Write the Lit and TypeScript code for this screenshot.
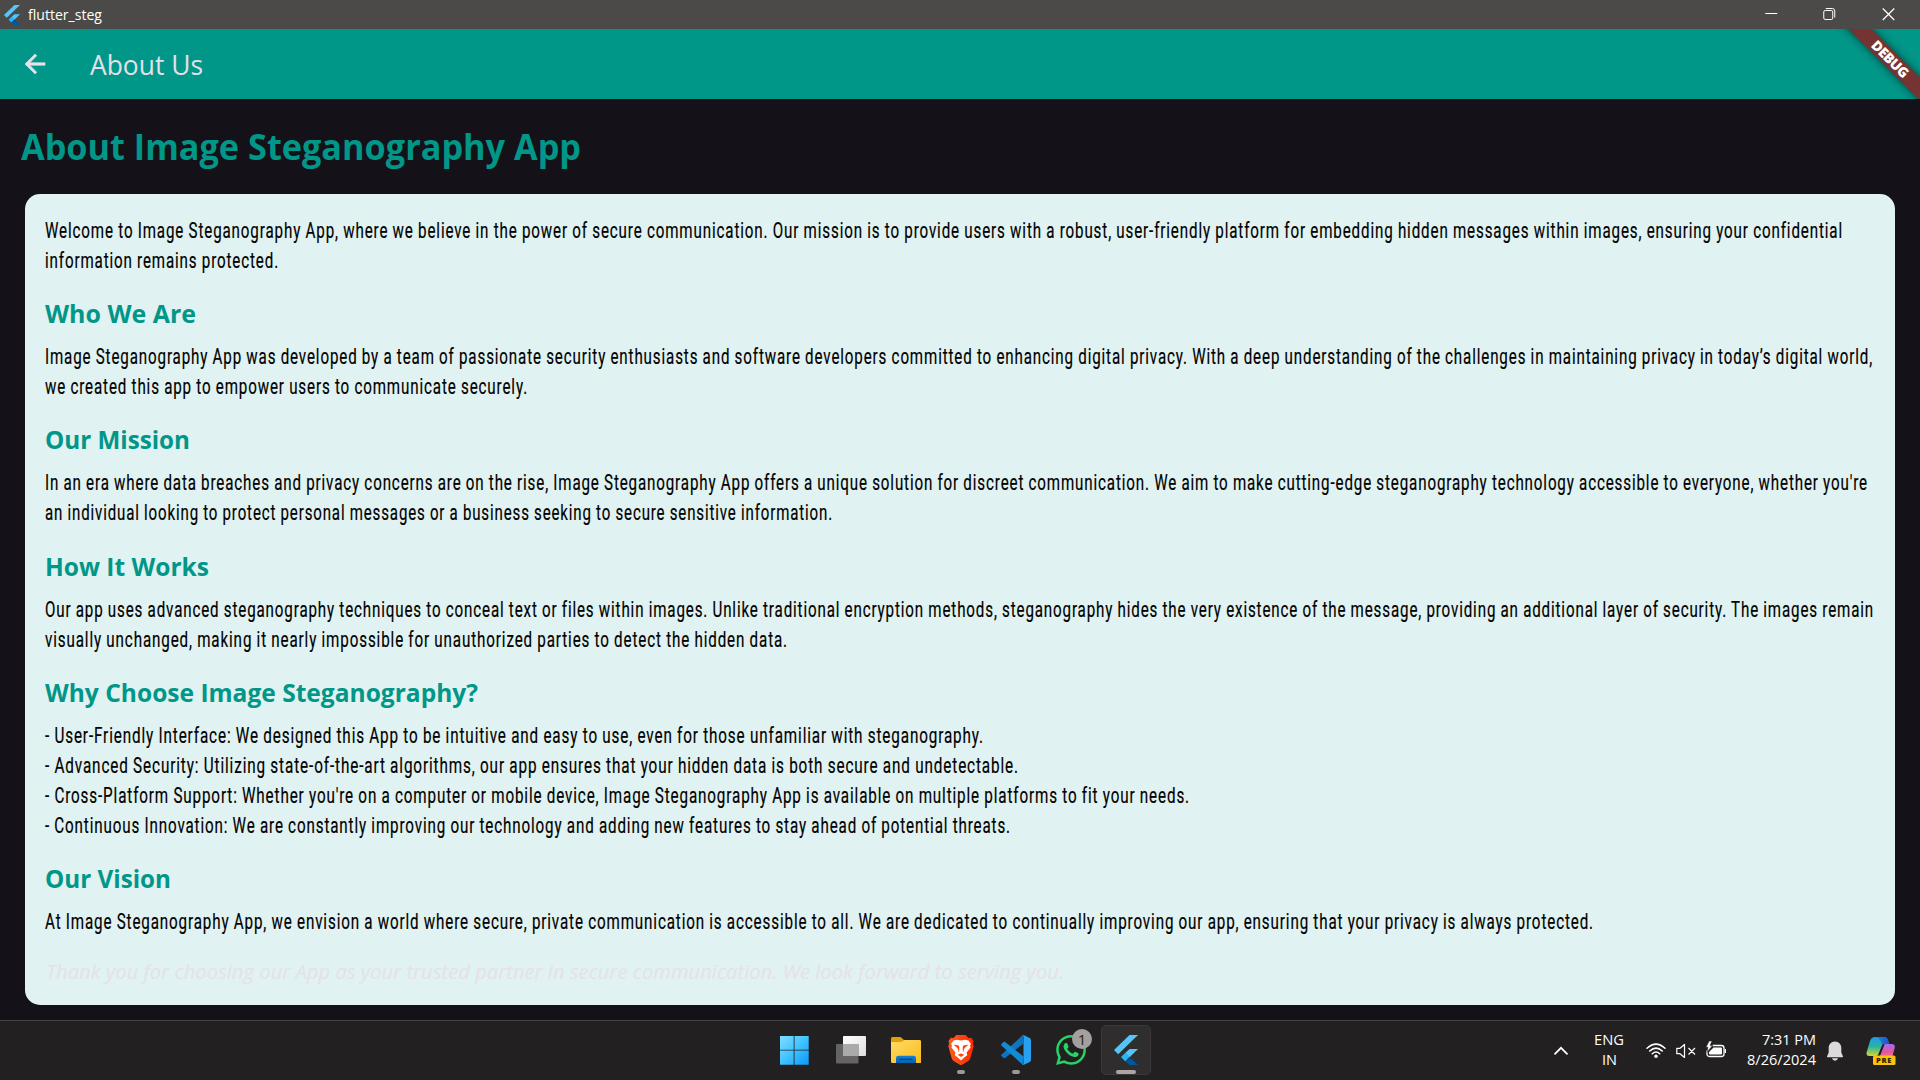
import { LitElement, html, svg, css } from "lit";
import { customElement, property } from "lit/decorators.js";

/** One line of text, condensed or widened horizontally to a given measure. */
@customElement("fit-text")
class FitText extends LitElement {
  @property() text = "";
  @property({ type: Number }) measure = 100;

  static styles = css`
    :host { display: block; white-space: pre; flex: none; }
    .t { display: inline-block; transform-origin: 0 50%; }
  `;

  render() {
    return html`<span class="t">${this.text}</span>`;
  }

  updated() {
    const t = this.renderRoot.querySelector(".t") as HTMLElement;
    this.style.width = this.measure + "px";
    t.style.transform = "none";
    const w = t.getBoundingClientRect().width;
    if (w > 0) t.style.transform = "scaleX(" + this.measure / w + ")";
  }
}

type Line = [string, number];
interface Section { title: Line; lines: Line[]; }

const INTRO: Line[] = [
  ["Welcome to Image Steganography App, where we believe in the power of secure communication. Our mission is to provide users with a robust, user-friendly platform for embedding hidden messages within images, ensuring your confidential", 1798],
  ["information remains protected.", 234],
];

const SECTIONS: Section[] = [
  { title: ["Who We Are", 151], lines: [
    ["Image Steganography App was developed by a team of passionate security enthusiasts and software developers committed to enhancing digital privacy. With a deep understanding of the challenges in maintaining privacy in today’s digital world,", 1828],
    ["we created this app to empower users to communicate securely.", 483],
  ] },
  { title: ["Our Mission", 145], lines: [
    ["In an era where data breaches and privacy concerns are on the rise, Image Steganography App offers a unique solution for discreet communication. We aim to make cutting-edge steganography technology accessible to everyone, whether you're", 1823],
    ["an individual looking to protect personal messages or a business seeking to secure sensitive information.", 788],
  ] },
  { title: ["How It Works", 164], lines: [
    ["Our app uses advanced steganography techniques to conceal text or files within images. Unlike traditional encryption methods, steganography hides the very existence of the message, providing an additional layer of security. The images remain", 1829],
    ["visually unchanged, making it nearly impossible for unauthorized parties to detect the hidden data.", 743],
  ] },
  { title: ["Why Choose Image Steganography?", 433], lines: [
    ["- User-Friendly Interface: We designed this App to be intuitive and easy to use, even for those unfamiliar with steganography.", 939],
    ["- Advanced Security: Utilizing state-of-the-art algorithms, our app ensures that your hidden data is both secure and undetectable.", 974],
    ["- Cross-Platform Support: Whether you're on a computer or mobile device, Image Steganography App is available on multiple platforms to fit your needs.", 1145],
    ["- Continuous Innovation: We are constantly improving our technology and adding new features to stay ahead of potential threats.", 966],
  ] },
  { title: ["Our Vision", 126], lines: [
    ["At Image Steganography App, we envision a world where secure, private communication is accessible to all. We are dedicated to continually improving our app, ensuring that your privacy is always protected.", 1549],
  ] },
];

const flutterLogo = svg`
  <path d="M15.5 0H24L4.2 19.2 0 15z" fill="#54c5f8"/>
  <path d="M15.5 14H24L15.6 22.2 11.2 18z" fill="#54c5f8"/>
  <path d="M11.3 17.8L15.6 22 11.3 26.4 7 22.1z" fill="#29b6f6"/>
  <path d="M11.3 26.3L15.6 22 24 30H15.5z" fill="#01579b"/>
  <path d="M11.3 26.3L15.6 22 17.6 24z" fill="#0a3d75" opacity=".6"/>`;

@customElement("app-root")
class AppRoot extends LitElement {
  static styles = css`
    :host { display: block; width: 1920px; height: 1080px; overflow: hidden; background: #141218;
      font-family: "Open Sans", "Noto Sans", sans-serif; }
    * { box-sizing: border-box; }
    svg { display: block; flex: none; }
    .screen { display: flex; flex-direction: column; height: 1080px; }
    .titlebar { height: 29px; background: #4c4a48; display: flex; align-items: center; color: #fff;
      justify-content: space-between; padding: 0 3px 0 4px; }
    .caption { display: flex; align-items: center; gap: 8px; }
    .caption .name { font-size: 14px; line-height: 20px; margin-top: 1px; }
    .win { display: flex; }
    .win svg { width: 58.500px; height: 29px; }
    .appbar { height: 70px; background: #009688; display: flex; align-items: center; padding-left: 20px;
      position: relative; overflow: hidden; color: #e6e0e9; }
    .appbar .name { margin: 2px 0 0 40px; font-size: 27px; line-height: 40px; }
    .ribbon { position: absolute; right: -50px; top: 22px; width: 160px; height: 16px; line-height: 16px;
      background: #773331; box-shadow: 0 0 8px rgba(0,0,0,.6); transform: rotate(45deg);
      color: #fff; text-align: center; font-size: 14px; font-weight: 800; letter-spacing: -.5px; }
    .page { flex: 1; padding: 0 25px; display: flex; flex-direction: column; }
    .headline { margin: 24px 0 23px -4px; font-size: 35px; line-height: 48px; font-weight: 700; color: #009688; }
    .card { background: #e0f2f1; border-radius: 15px; height: 811px; padding: 20.700px 20px 0; overflow: hidden; color: #000; }
    .lines { font-family: Roboto, "Open Sans", sans-serif; font-size: 22.500px; line-height: 30px;
      letter-spacing: 1.300px; word-spacing: -.500px; -webkit-text-stroke: .2px #000; }
    .section { margin-top: 22.300px; }
    .section .title { font-size: 25px; line-height: 33.33px; font-weight: 700; color: #009688; margin-bottom: 10.700px; }
    .thanks { margin: 21.500px 0 0 1px; font-size: 19.500px; line-height: 27px; font-style: italic; color: #e6e0e9; }
    .taskbar { height: 60px; background: #222021; border-top: 1px solid #444345; display: flex; color: #fff;
      padding-left: 771px; }
    .apps { display: flex; gap: 5px; padding-top: 4px; }
    .tile { width: 50px; height: 50px; border-radius: 5px; position: relative; display: flex;
      justify-content: center; padding-top: 10px; }
    .tile.start { padding-right: 5px; }
    .tile.on { background: #2f2d2e; border: 1px solid #3a3839; padding-top: 9px; }
    .dot::after { content: ""; position: absolute; left: 21px; bottom: 1px; width: 8px; height: 4px;
      border-radius: 2px; background: #9b9a9a; }
    .on.dot::after { left: 14px; bottom: 0; width: 20px; background: #aaa7a3; }
    .badge { position: absolute; left: 26px; top: 4px; width: 20px; height: 20px; border-radius: 50%;
      background: #a3a09d; color: #222; font-size: 15px; line-height: 20px; text-align: center; }
    .tray { flex: 1; display: flex; align-items: center; padding-left: 400px; font-size: 14.500px; line-height: 20px; }
    .lang { margin-left: 22px; width: 32px; display: flex; flex-direction: column; align-items: center; padding-bottom: 1px; }
    .status { display: flex; margin-left: 21px; gap: 10px; }
    .clock { margin-left: 19px; display: flex; flex-direction: column; align-items: flex-end; width: 71px; padding-bottom: 2px; }
    .bell { margin-left: 10px; }
    .copilot { margin-left: 22px; }
    .pre { font-size: 7.500px; font-weight: 800; letter-spacing: .700px; }
  `;

  private lines(ls: Line[]) {
    return html`<div class="lines">${ls.map(([t, w]) => html`<fit-text .text=${t} .measure=${w}></fit-text>`)}</div>`;
  }

  private apps() {
    return html`<div class="apps">
      <div class="tile start"><svg width="30" height="30" viewBox="0 0 30 30">
        <defs><linearGradient id="w" x1="0" y1="0" x2="30" y2="30" gradientUnits="userSpaceOnUse"><stop stop-color="#84deff"/><stop offset=".5" stop-color="#42c4ff"/><stop offset="1" stop-color="#0c95fb"/></linearGradient></defs>
        <path fill="url(#w)" d="M1 1h13.7v13.7H1zM15.5 1H29.700v13.7H15.5zM1 15.5h13.7V29.700H1zM15.5 15.5H29.700V29.700H15.5z"/></svg></div>
      <div class="tile"><svg width="30" height="30" viewBox="0 0 30 30">
        <defs><linearGradient id="tv" x1="0" y1="0" x2="1" y2="1"><stop stop-color="#fff"/><stop offset="1" stop-color="#ddd"/></linearGradient></defs>
        <rect x="7" y="1" width="23" height="20" rx="1" fill="url(#tv)"/>
        <rect x="0" y="9" width="22.5" height="19.5" rx="1" fill="#646464"/><path d="M7 9h15.5v12H7z" fill="#aaa"/></svg></div>
      <div class="tile"><svg width="30" height="30" viewBox="0 0 30 30">
        <defs><linearGradient id="f" x1="0" y1="0" x2="1" y2="1"><stop stop-color="#ffdb66"/><stop offset="1" stop-color="#fbbc1c"/></linearGradient>
        <linearGradient id="fb" x1="0" y1="0" x2="0" y2="1"><stop stop-color="#1282d8"/><stop offset="1" stop-color="#0561ae"/></linearGradient></defs>
        <path d="M0 8V3.5Q0 2 1.5 2H9.5L13 5H28Q30 5 30 7V8z" fill="#e2a100"/>
        <path d="M0 7H10.5L13.5 5H28.5Q30 5 30 6.5V28H1.5Q0 28 0 26.5z" fill="url(#f)"/>
        <path d="M5 28V23Q5 20.7 7.5 20.7H22.5Q25 20.7 25 23V28z" fill="url(#fb)"/><path d="M8.5 24.3H21.5" stroke="#043f78" stroke-width="1.2"/></svg></div>
      <div class="tile dot"><svg width="30" height="30" viewBox="0 0 30 30">
        <defs><linearGradient id="b" x1="0" x2="1"><stop stop-color="#ff5a1c"/><stop offset="1" stop-color="#fb2c00"/></linearGradient></defs>
        <path d="M10.2 0H19.8L22.4 3 25.2 2.8 27.6 6.2 26.8 8.6 27.7 11 24.5 22.7Q23.8 25 22 26.2L15 30.4 8 26.2Q6.200 25 5.500 22.700L2.300 11 3.200 8.600 2.400 6.200 4.800 2.800 7.600 3z" fill="url(#b)"/>
        <path d="M10.600 4.800L15 5.600 19.400 4.800 22.500 5.400 25 8.900 24 10.500 24.600 12.500 20.600 17.500 21.200 20.300 18.800 22 15 25.500 11.200 22 8.800 20.300 9.400 17.500 5.400 12.500 6 10.500 5 8.900 7.500 5.400z" fill="#fff"/>
        <path d="M7.500 9.600L12.600 10.600 13.300 12 13.200 16 11.200 18 12.600 16 11.500 13.200zM22.500 9.600L17.400 10.600 16.700 12 16.800 16 18.800 18 17.400 16 18.500 13.200zM11.700 19.700L15 18.500 18.300 19.700 15 22z" fill="#ff4510"/></svg></div>
      <div class="tile dot"><svg width="30" height="30" viewBox="0 0 30 30">
        <path d="M21.700 .3L22.500 8.500 4.200 22.900Q3.300 23.600 2.400 22.800L.5 21.100Q-.3 20.200.6 19.400z" fill="#0f74be"/>
        <path d="M.5 8.900L2.400 7.200Q3.300 6.500 4.200 7.100L22.500 21.500 21.700 29.700 .6 10.700Q-.3 9.800.5 8.900z" fill="#1489d6"/>
        <path d="M21.700 .3Q22.200 0 23 .3L28.700 3Q30 3.700 30 5V25Q30 26.300 28.700 27L23 29.700Q21.900 30.100 21 29.200 22.500 29.600 22.500 27.800V2.200Q22.500 .6 21 .8z" fill="#27a1f0"/></svg></div>
      <div class="tile"><svg width="30" height="30" viewBox="0 0 24 24">
        <path fill="#25d366" d="M17.472 14.382c-.297-.149-1.758-.867-2.030-.967-.273-.099-.471-.148-.670.150-.197.297-.767.966-.940 1.164-.173.199-.347.223-.644.075-.297-.150-1.255-.463-2.390-1.475-.883-.788-1.480-1.761-1.653-2.059-.173-.297-.018-.458.130-.606.134-.133.298-.347.446-.520.149-.174.198-.298.298-.497.099-.198.050-.371-.025-.520-.075-.149-.669-1.612-.916-2.207-.242-.579-.487-.500-.669-.510-.173-.008-.371-.010-.570-.010-.198 0-.520.074-.792.372-.272.297-1.040 1.016-1.040 2.479 0 1.462 1.065 2.875 1.213 3.074.149.198 2.096 3.200 5.077 4.487.709.306 1.262.489 1.694.625.712.227 1.360.195 1.871.118.571-.085 1.758-.719 2.006-1.413.248-.694.248-1.289.173-1.413-.074-.124-.272-.198-.570-.347m-5.421 7.403h-.004a9.870 9.870 0 01-5.031-1.378l-.361-.214-3.741.982.998-3.648-.235-.374a9.860 9.860 0 01-1.510-5.260c.001-5.450 4.436-9.884 9.888-9.884 2.640 0 5.122 1.030 6.988 2.898a9.825 9.825 0 012.893 6.994c-.003 5.450-4.437 9.884-9.885 9.884m8.413-18.297A11.815 11.815 0 0012.050 0C5.495 0 .160 5.335.157 11.892c0 2.096.547 4.142 1.588 5.945L.057 24l6.305-1.654a11.882 11.882 0 005.683 1.448h.005c6.554 0 11.890-5.335 11.893-11.893a11.821 11.821 0 00-3.480-8.413z"/></svg>
        <span class="badge">1</span></div>
      <div class="tile on dot"><svg width="24" height="30" viewBox="0 0 24 30">${flutterLogo}</svg></div>
    </div>`;
  }

  private tray() {
    return html`<div class="tray">
      <svg width="20" height="20" viewBox="0 0 20 20" fill="none" stroke="#fff" stroke-width="1.7"><path d="M3.500 13.300L10 6.800 16.500 13.300"/></svg>
      <div class="lang"><fit-text text="ENG" measure="30"></fit-text><fit-text text="IN" measure="15"></fit-text></div>
      <div class="status">
        <svg width="20" height="20" viewBox="0 0 20 20" fill="none" stroke="#fff" stroke-width="1.500" stroke-linecap="round">
          <path d="M1 7.300Q10-1 19 7.300M3.700 10Q10 4.200 16.300 10M6.300 12.700Q10 9.300 13.700 12.700"/><circle cx="10" cy="15.300" r="1.700" fill="#fff" stroke="none"/></svg>
        <svg width="20" height="20" viewBox="0 0 20 20" fill="none" stroke="#fff" stroke-width="1.200" stroke-linejoin="round">
          <path d="M.8 7.300H4L8.500 3.500V16.500L4 12.700H.8zM12.500 7L19 13.500M19 7L12.500 13.500"/></svg>
        <svg width="20" height="20" viewBox="0 0 20 20">
          <path d="M6.500 4.500H15.500Q18 4.500 18 7V13Q18 15.500 15.500 15.500H3.500Q1 15.500 1 13V9.500" fill="none" stroke="#fff" stroke-width="1.300"/>
          <path d="M7.500 6.500H15Q16 6.500 16 7.500V12.500Q16 13.500 15 13.500H4Q3 13.500 3 12.500V11zM18.700 8H20V12H18.700z" fill="#fff"/>
          <path d="M3.200 0L0 6.200H2L1 11.200 6.500 4.500H4L6 0z" fill="#fff" stroke="#222021" stroke-width=".5"/></svg>
      </div>
      <div class="clock"><fit-text text="7:31 PM" measure="54"></fit-text><fit-text text="8/26/2024" measure="69"></fit-text></div>
      <svg class="bell" width="18" height="20" viewBox="0 0 18 20" fill="#dcdbda"><path d="M9 .5C5 .5 2.700 3.500 2.700 7V11.500L1 15.500Q.9 16.300 1.700 16.300H16.300Q17.100 16.300 17 15.500L15.300 11.500V7C15.300 3.500 13 .5 9 .5zM6 17.300H12Q11.500 19.700 9 19.700T6 17.300z"/></svg>
      <svg class="copilot" width="30" height="30" viewBox="0 0 30 30">
        <defs>
          <linearGradient id="c1" x1="0" y1="0" x2="0" y2="1"><stop stop-color="#1f9be8"/><stop offset=".5" stop-color="#28b3a2"/><stop offset="1" stop-color="#d9d72b"/></linearGradient>
          <linearGradient id="c2" x1="0" y1="0" x2="0" y2="1"><stop stop-color="#a968ee"/><stop offset=".55" stop-color="#e4569f"/><stop offset="1" stop-color="#ff8557"/></linearGradient>
          <linearGradient id="c3"><stop stop-color="#1b8ee0"/><stop offset="1" stop-color="#2350c8"/></linearGradient></defs>
        <path d="M9 1H18.500Q21 1 21.800 3.500L23 7.500H19Q17 7.500 16 10L13.500 17Q12.500 20 9.500 20H3.500Q-.3 20 .7 16L4 5Q5.300 1 9 1z" fill="url(#c1)"/>
        <path d="M9 1H18.500Q21 1 21.800 3.500L23 7.500H19Q17.200 7.500 16.300 9.200 15 2.500 9 1z" fill="url(#c3)"/>
        <path d="M20 8H25.500Q29.600 8 28.700 12L26.500 20Q25.500 23 22.500 23H9.500Q12.300 22.500 13.200 20L16 11Q17 8 20 8z" fill="url(#c2)"/>
        <path d="M16.500 8.500H18.500L14 20H11.500z" fill="#221f22"/>
        <rect x="7" y="19.500" width="22.500" height="9.500" rx="1.500" fill="#fcc30b"/>
        <text class="pre" x="10" y="27" fill="#2c2200">PRE</text></svg>
    </div>`;
  }

  render() {
    return html`<div class="screen">
      <div class="titlebar">
        <div class="caption">
          <svg width="16" height="20" viewBox="0 0 24 30">${flutterLogo}</svg>
          <fit-text class="name" text="flutter_steg" measure="74"></fit-text>
        </div>
        <div class="win">
          <svg viewBox="0 0 58 29"><path d="M23 13.500H35" stroke="#fff"/></svg>
          <svg viewBox="0 0 58 29" fill="none" stroke="#fff"><rect x="23.500" y="10.500" width="9" height="9" rx="1.500"/><path d="M25.500 8.500H32Q34.500 8.500 34.500 11V17.500" /></svg>
          <svg viewBox="0 0 58 29"><path d="M23.500 8.500L35 20M35 8.500L23.500 20" stroke="#fff" stroke-width="1.200"/></svg>
        </div>
      </div>
      <div class="appbar">
        <svg width="30" height="30" viewBox="0 0 24 24"><path fill="#e6e0e9" stroke="#e6e0e9" stroke-width=".5" d="M20 11H7.830l5.590-5.590L12 4l-8 8 8 8 1.410-1.410L7.830 13H20v-2z"/></svg>
        <fit-text class="name" text="About Us" measure="113"></fit-text>
        <div class="ribbon">DEBUG</div>
      </div>
      <div class="page">
        <fit-text class="headline" text="About Image Steganography App" measure="560"></fit-text>
        <div class="card">
          ${this.lines(INTRO)}
          ${SECTIONS.map((s) => html`<div class="section">
            <fit-text class="title" .text=${s.title[0]} .measure=${s.title[1]}></fit-text>
            ${this.lines(s.lines)}
          </div>`)}
          <fit-text class="thanks" text="Thank you for choosing our App as your trusted partner in secure communication. We look forward to serving you." measure="1018"></fit-text>
        </div>
      </div>
      <div class="taskbar">${this.apps()}${this.tray()}</div>
    </div>`;
  }
}
